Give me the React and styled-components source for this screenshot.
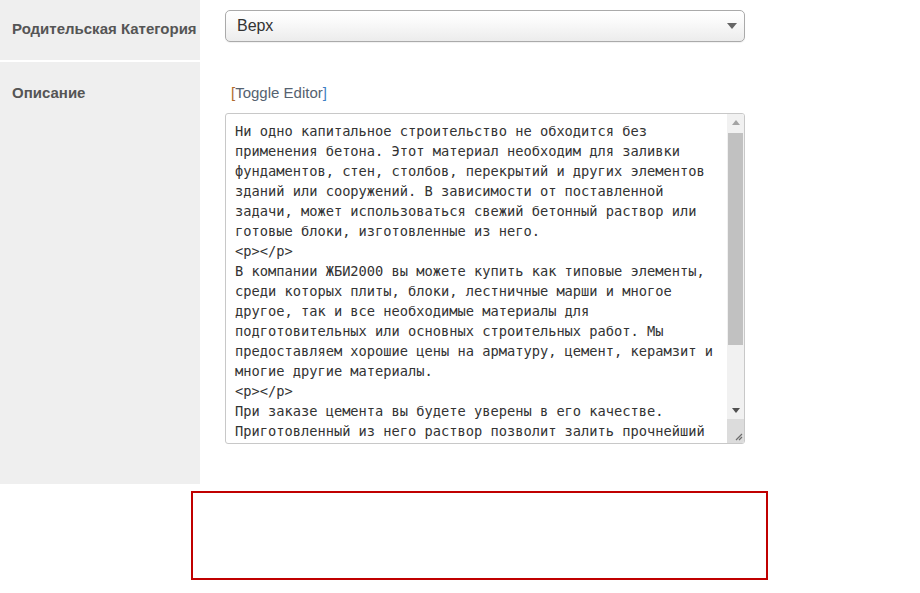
import React from "react";
import styled, { createGlobalStyle } from "styled-components";

const GlobalStyle = createGlobalStyle`
  html, body {
    margin: 0;
    padding: 0;
    background: #ffffff;
  }
`;

const description = [
  "Ни одно капитальное строительство не обходится без",
  "применения бетона. Этот материал необходим для заливки",
  "фундаментов, стен, столбов, перекрытий и других элементов",
  "зданий или сооружений. В зависимости от поставленной",
  "задачи, может использоваться свежий бетонный раствор или",
  "готовые блоки, изготовленные из него.",
  "<p></p>",
  "В компании ЖБИ2000 вы можете купить как типовые элементы,",
  "среди которых плиты, блоки, лестничные марши и многое",
  "другое, так и все необходимые материалы для",
  "подготовительных или основных строительных работ. Мы",
  "предоставляем хорошие цены на арматуру, цемент, керамзит и",
  "многие другие материалы.",
  "<p></p>",
  "При заказе цемента вы будете уверены в его качестве.",
  "Приготовленный из него раствор позволит залить прочнейший",
  "фундамент, а бетонные блоки прослужат долгие годы.",
  "<p></p>",
  "Звоните нам, и мы поможем подобрать нужные материалы.",
].join("\n");

export default function App() {
  return (
    <>
      <GlobalStyle />
      <Form>
        <Row>
          <Label top={20}>Родительская Категория</Label>
          <Field top={10} bottom={18}>
            <Select>
              <span>Верх</span>
              <svg width="10" height="6" viewBox="0 0 10 6">
                <path d="M0 0 H10 L5 6 Z" fill="#666" />
              </svg>
            </Select>
          </Field>
        </Row>

        <Row>
          <Label top={22}>Описание</Label>
          <Field top={22} bottom={40}>
            <Toggle>
              <Bracket>[</Bracket>Toggle Editor<Bracket right>]</Bracket>
            </Toggle>
            <EditorBox>
              <TextArea defaultValue={description} spellCheck={false} />
              <Scrollbar>
                <ScrollButton>
                  <svg width="8" height="5" viewBox="0 0 8 5">
                    <path d="M0 5 L4 0 L8 5 Z" fill="#a3a3a3" />
                  </svg>
                </ScrollButton>
                <Track>
                  <Thumb />
                </Track>
                <ScrollButton>
                  <svg width="8" height="5" viewBox="0 0 8 5">
                    <path d="M0 0 H8 L4 5 Z" fill="#505050" />
                  </svg>
                </ScrollButton>
                <Corner>
                  <svg width="10" height="10" viewBox="0 0 10 10">
                    <path d="M9 3 L3 9 M9 6 L6 9" stroke="#6b6b6b" strokeWidth="1.2" />
                  </svg>
                </Corner>
              </Scrollbar>
            </EditorBox>
          </Field>
        </Row>
      </Form>

      <Notice />
    </>
  );
}

const Form = styled.div`
  display: flex;
  flex-direction: column;
  gap: 2px;
  width: 920px;
`;

const Row = styled.div`
  display: grid;
  grid-template-columns: 200px 1fr;
`;

const Label = styled.div`
  background: #efefef;
  padding: ${(p) => p.top}px 12px 0;
  font-family: "Liberation Sans", Arial, sans-serif;
  font-weight: bold;
  font-size: 15px;
  line-height: 17px;
  color: #555555;
  white-space: nowrap;
`;

const Field = styled.div`
  padding: ${(p) => p.top}px 0 ${(p) => p.bottom}px 25px;
  display: flex;
  flex-direction: column;
`;

const Select = styled.div`
  box-sizing: border-box;
  width: 520px;
  height: 32px;
  border: 1px solid #aaaaaa;
  border-radius: 5px;
  background: linear-gradient(#ffffff 0%, #fbfbfb 30%, #ececec 100%);
  box-shadow: 0 1px 1px rgba(0, 0, 0, 0.06);
  display: flex;
  align-items: center;
  justify-content: space-between;
  padding: 0 7px 0 11px;
  font-family: "Liberation Sans", Arial, sans-serif;
  font-size: 16px;
  color: #333333;
`;

const Toggle = styled.div`
  font-family: "Liberation Sans", Arial, sans-serif;
  font-size: 15px;
  line-height: 17px;
  color: #556270;
  padding-left: 6px;
  margin-bottom: 12px;
`;

const Bracket = styled.span`
  color: ${(p) => (p.right ? "#3d7fc4" : "#b0692c")};
`;

const EditorBox = styled.div`
  box-sizing: border-box;
  width: 520px;
  height: 331px;
  border: 1px solid #c8c8c8;
  border-radius: 3px;
  display: flex;
  overflow: hidden;
  background: #ffffff;
`;

const TextArea = styled.textarea`
  flex: 1;
  border: none;
  outline: none;
  resize: none;
  overflow: hidden;
  margin: 0;
  padding: 7px 0 0 9px;
  font-family: "DejaVu Sans Mono", "Liberation Mono", monospace;
  font-size: 13.7px;
  line-height: 20px;
  color: #333333;
  white-space: pre;
  background: transparent;
`;

const Scrollbar = styled.div`
  width: 17px;
  display: flex;
  flex-direction: column;
  background: #f1f1f1;
`;

const ScrollButton = styled.div`
  height: 17px;
  display: flex;
  align-items: center;
  justify-content: center;
`;

const Track = styled.div`
  flex: 1;
  padding: 2px 1px 0;
`;

const Thumb = styled.div`
  height: 212px;
  background: #c1c1c1;
`;

const Corner = styled.div`
  height: 22px;
  background: #dcdcdc;
  display: flex;
  align-items: flex-end;
  justify-content: flex-end;
  padding: 0 1px 2px 0;
`;

const Notice = styled.div`
  box-sizing: border-box;
  width: 577px;
  height: 89px;
  margin: 7px 0 0 191px;
  border: 2px solid #c00000;
`;
